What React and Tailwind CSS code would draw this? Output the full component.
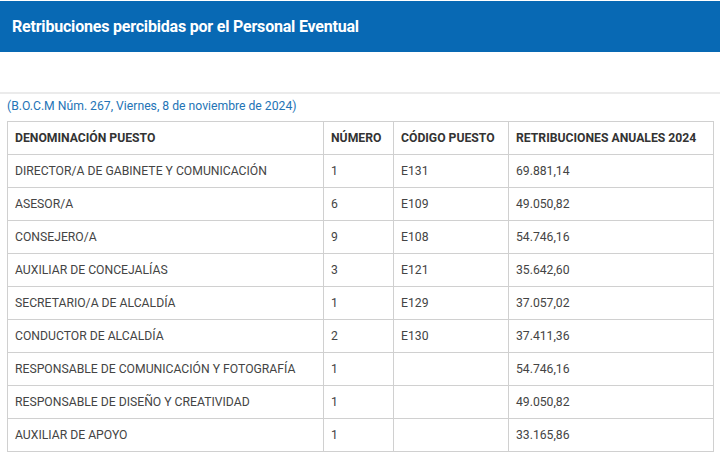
const rows = [
  ['DIRECTOR/A DE GABINETE Y COMUNICACIÓN', '1', 'E131', '69.881,14'],
  ['ASESOR/A', '6', 'E109', '49.050,82'],
  ['CONSEJERO/A', '9', 'E108', '54.746,16'],
  ['AUXILIAR DE CONCEJALÍAS', '3', 'E121', '35.642,60'],
  ['SECRETARIO/A DE ALCALDÍA', '1', 'E129', '37.057,02'],
  ['CONDUCTOR DE ALCALDÍA', '2', 'E130', '37.411,36'],
  ['RESPONSABLE DE COMUNICACIÓN Y FOTOGRAFÍA', '1', '', '54.746,16'],
  ['RESPONSABLE DE DISEÑO Y CREATIVIDAD', '1', '', '49.050,82'],
  ['AUXILIAR DE APOYO', '1', '', '33.165,86'],
];

const headers = ['DENOMINACIÓN PUESTO', 'NÚMERO', 'CÓDIGO PUESTO', 'RETRIBUCIONES ANUALES 2024'];

export default function App() {
  return (
    <div className="w-[720px] h-[456px] overflow-hidden bg-white font-['Roboto',sans-serif]">
      <div className="mt-px h-[51px] bg-[#0869b4] flex items-center px-3">
        <h1 className="text-[16px] font-bold text-white tracking-[-0.2px]">Retribuciones percibidas por el Personal Eventual</h1>
      </div>
      <div className="h-[40px]" />
      <div className="border-t-2 border-[#ebebeb] px-[7px] pt-[2px]">
        <p className="text-[12.2px] leading-[20px] text-[#2474b6]">(B.O.C.M Núm. 267, Viernes, 8 de noviembre de 2024)</p>
        <table className="mt-[5px] w-[707px] border-collapse table-fixed text-[12.2px]">
          <colgroup>
            <col className="w-[316px]" />
            <col className="w-[70px]" />
            <col className="w-[115px]" />
            <col />
          </colgroup>
          <thead>
            <tr className="h-[33px]">
              {headers.map((h) => (
                <th key={h} className="border border-[#d0d0d0] px-[7px] text-left font-bold text-[#333]">{h}</th>
              ))}
            </tr>
          </thead>
          <tbody>
            {rows.map((r) => (
              <tr key={r[0]} className="h-[33px]">
                {r.map((c, i) => (
                  <td key={i} className="border border-[#d0d0d0] px-[7px] text-[#444]">{c}</td>
                ))}
              </tr>
            ))}
          </tbody>
        </table>
      </div>
    </div>
  );
}
